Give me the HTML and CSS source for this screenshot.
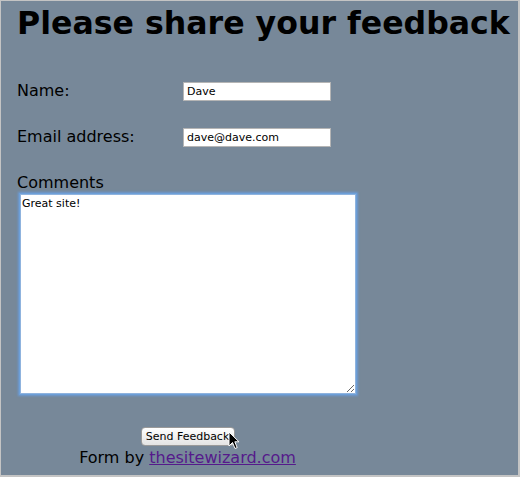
FILE: index.html
```html
<!DOCTYPE html>
<html>
<head>
<meta charset="utf-8">
<link rel="stylesheet" href="styles.css">
</head>
<body>
<div class="page">
  <h1 class="title">Please share your feedback</h1>
  <form class="form">
    <div class="row">
      <label class="label">Name:</label>
      <input class="field" type="text" value="Dave">
    </div>
    <div class="row">
      <label class="label">Email address:</label>
      <input class="field" type="text" value="dave@dave.com">
    </div>
    <div class="comments">
      <label class="label">Comments</label>
      <textarea class="area">Great site!</textarea>
    </div>
    <div class="actions">
      <span class="btn-wrap">
        <button class="btn" type="button">Send Feedback</button>
        <svg class="cursor" width="12" height="19" viewBox="0 0 12 19"><path d="M1 1 L1 15 L4.5 11.5 L7 17.5 L9.2 16.6 L6.8 10.8 L11 10.8 Z" fill="#000" stroke="#fff" stroke-width="1"/></svg>
      </span>
    </div>
    <p class="credit">Form by <a href="#" class="link">thesitewizard.com</a></p>
  </form>
</div>
</body>
</html>
```
FILE: styles.css
```css
html, body { margin: 0; padding: 0; }
body { font-family: "DejaVu Sans", Verdana, sans-serif; color: #000; }
.page {
  box-sizing: border-box;
  width: 520px;
  height: 477px;
  background: #778899;
  border-top: 1px solid #c4c4c4;
  border-left: 1px solid #c4c4c4;
  border-right: 2px solid #c4c4c4;
  border-bottom: 2px solid #c4c4c4;
  padding-left: 16px;
  overflow: hidden;
}
.title {
  margin: 0;
  padding-top: 3px;
  font-size: 31.6px;
  line-height: 38px;
  font-weight: bold;
  white-space: nowrap;
}
.form { width: 341px; margin: 0; padding-top: 39px; }
.row {
  display: grid;
  grid-template-columns: 166px 148px;
  align-items: center;
  height: 20px;
  margin-bottom: 26px;
}
.label { font-size: 16px; line-height: 20px; }
.field {
  box-sizing: border-box;
  width: 148px;
  height: 19px;
  margin: 0;
  padding: 1px 3px 0;
  border: 1px solid #b5b5b5;
  background: #fff;
  font-family: "DejaVu Sans", sans-serif;
  font-size: 11px;
  color: #000;
}
.comments { display: flex; flex-direction: column; }
.comments .label { line-height: 19px; }
.area {
  box-sizing: border-box;
  width: 336px;
  height: 200px;
  margin: 2px 0 0 3px;
  padding: 2px 1px;
  border: 1px solid #8fb3de;
  box-shadow: 0 0 0 1px #6c9fd8, 0 0 2px 2px #6b9ad4;
  background: #fff;
  font-family: "DejaVu Sans", sans-serif;
  font-size: 11px;
  color: #000;
  resize: both;
}
.actions { text-align: center; padding-top: 31px; height: 20px; }
.btn-wrap { position: relative; display: inline-block; }
.btn {
  box-sizing: border-box;
  width: 94px;
  height: 19px;
  padding: 0;
  border: 1px solid #9a9a9a;
  border-radius: 4px;
  background: linear-gradient(#ffffff, #f1f1f1 50%, #e4e4e4);
  font-family: "DejaVu Sans", sans-serif;
  font-size: 11px;
  color: #000;
}
.cursor { position: absolute; left: 87px; top: 6px; }
.credit { margin: 3px 0 0; text-align: center; font-size: 16px; line-height: 19px; }
.link { color: #551a8b; text-decoration: underline; }
```
